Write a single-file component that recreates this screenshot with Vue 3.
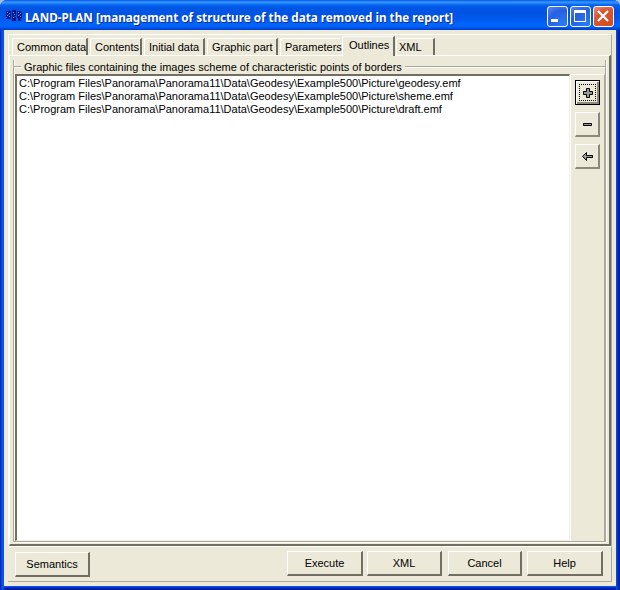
<script setup>
const tabs = [
  { name: 'Common data', id: 'common' },
  { name: 'Contents', id: 'contents' },
  { name: 'Initial data', id: 'initial' },
  { name: 'Graphic part', id: 'graphic' },
  { name: 'Parameters', id: 'params' },
  { name: 'Outlines', id: 'outlines' },
  { name: 'XML', id: 'xml' },
]
const folder = 'C:\\Program Files\\Panorama\\Panorama11\\Data\\Geodesy\\Example500\\Picture\\'
const files = ['geodesy.emf', 'sheme.emf', 'draft.emf'].map((f) => folder + f)
</script>

<template>
  <div class="window">
    <header class="title">
      <svg class="app" width="17" height="16" viewBox="0 0 17 16" shape-rendering="crispEdges">
        <path d="M0 2h5v8H0zM6 1h4v11H6zM11 2h5v7h-5zM12 9h3v3h-3z" fill="#06168c" />
        <path d="M1 3h1v1H1zM3 4h1v1H3zM1 6h1v1H1zM3 7h1v1H3zM7 3h1v1H7zM8 5h1v1H8zM7 8h1v1H7zM12 3h1v1h-1zM14 4h1v1h-1zM12 6h1v1h-1zM14 7h1v1h-1z" fill="#58a8ee" />
        <path d="M2 5h1v1H2zM0 8h1v1H0zM9 7h1v1H9zM13 5h1v1h-1zM15 2h1v1h-1z" fill="#2c60e4" />
      </svg>
      <h1><span>LAND-PLAN [management of structure of the data removed in the report]</span></h1>
      <div class="controls">
        <button class="ctl"><svg width="21" height="21"><path d="M4 13h7v3H4z" fill="#fff" /></svg></button>
        <button class="ctl"><svg width="21" height="21"><path d="M4 4h12v12H4zM5 7v8h10V7z" fill="#fff" fill-rule="evenodd" /></svg></button>
        <button class="ctl close"><svg width="21" height="21"><path d="M5 5l10 10M15 5L5 15" stroke="#fff" stroke-width="2.2" /></svg></button>
      </div>
    </header>
    <main class="client">
      <section class="upper">
        <nav class="tabs">
          <button v-for="t in tabs" :key="t.id" class="tab" :class="[t.id, { active: t.id === 'outlines' }]"><span>{{ t.name }}</span></button>
        </nav>
        <div class="page">
          <div class="group">
            <div class="legend"><i class="stub"></i><span>Graphic files containing the images scheme of characteristic points of borders</span><i class="rule"></i></div>
            <div class="body">
              <div class="list">
                <div v-for="f in files" :key="f" class="row"><span>{{ f }}</span></div>
              </div>
              <div class="side">
                <button class="tool focus"><svg width="17" height="17"><path d="M7.5 4.5h3v3h3v3h-3v3h-3v-3h-3v-3h3z" fill="#999" stroke="#000" /></svg></button>
                <button class="tool"><svg width="17" height="17"><path d="M4.5 7.5h8v2h-8z" fill="#999" stroke="#000" /></svg></button>
                <button class="tool"><svg width="17" height="17"><path d="M3.5 8.5l4-4v3h6v2h-6v3z" fill="#999" stroke="#000" /></svg></button>
              </div>
            </div>
          </div>
        </div>
      </section>
      <footer class="footer">
        <button class="btn sem"><span>Semantics</span></button>
        <button class="btn exe"><span>Execute</span></button>
        <button class="btn x"><span>XML</span></button>
        <button class="btn can"><span>Cancel</span></button>
        <button class="btn help"><span>Help</span></button>
      </footer>
    </main>
  </div>
</template>

<style>
body { margin: 0; background: #a6bfe8; overflow: hidden; }
</style>
<style scoped>
* { box-sizing: border-box; }
button { margin: 0; padding: 0; font: inherit; color: inherit; border: 0; background: #ece9d8; border-radius: 0; }
span { white-space: nowrap; }
svg { display: block; flex: none; }
.window { width: 620px; height: 590px; display: flex; flex-direction: column; background: linear-gradient(90deg, #001ea0 0, #0831d9 1px, #0855dd 2px, #0855dd 4px, #0855dd 616px, #0041dc 617px, #001ea0 619px); border-radius: 7px 7px 0 0; font: 11px/13px "Liberation Sans", Arial, sans-serif; color: #000; overflow: hidden; }
.title { height: 30px; flex: none; display: flex; align-items: flex-start; padding: 6px 6px 0; background: linear-gradient(#0058e6 0, #3a93ff 2px, #288eff 3px, #0463ee 5px, #0055e5 8px, #0054e3 14px, #005bf0 20px, #0066ff 25px, #0060f8 27px, #0046d0 29px, #003dd7 30px); }
.app { margin-top: 3px; }
h1 { flex: 1; margin: 3px 0 0 2px; font: bold 13px/17px "Noto Sans", sans-serif; color: #fff; text-shadow: 1px 1px #0a2a8c; font-stretch: condensed; }
h1 span { display: inline-block; transform-origin: 0 50%; transform: scaleX(.9); }
.controls { display: flex; gap: 2px; }
.ctl { width: 21px; height: 21px; border: 1px solid #fff; border-radius: 3px; background: radial-gradient(circle at 80% 90%, #2a7cf4, #2560e2 60%, #5c88f0); }
.ctl svg { margin: -1px; }
.close { background: radial-gradient(circle at 80% 90%, #d84c20, #da5330 60%, #ed8f78); }
.client { flex: 1; margin: 0 4px 4px; padding: 4px 4px 4px; background: #ece9d8; box-shadow: 0 1px #0855dd, 0 2px #0831d9, 0 4px #001ea0; }
.upper { height: 512px; border-top: 1px solid #fff; border-left: 1px solid #fff; border-right: 1px solid #aca899; box-shadow: inset 0 0 #fff; }
.tabs { height: 20px; display: flex; align-items: flex-end; padding-left: 3px; }
.tab { height: 17px; flex: none; border: solid; border-width: 1px 2px 0 1px; border-color: #fff #716f64 #fff #fff; border-right-style: solid; text-align: left; padding-left: 4px; border-top-left-radius: 2px; margin-right: 2px; line-height: 15px; }
.common { width: 76px; }
.contents { width: 52px; }
.initial { width: 61px; }
.graphic { width: 71px; }
.params { width: 60px; border-right: 0; }
.outlines { width: 53px; padding-left: 6px; }
.xml { width: 39px; padding-left: 2px; }
.active { height: 20px; margin: 0 1px 0 0; margin-bottom: -1px; line-height: 16px; padding-bottom: 3px; }
.page { height: 491px; border: solid; border-width: 1px 2px 2px 1px; border-color: #fff #716f64 #716f64 #fff; padding: 4px 3px 0 3px; }
.group { height: 482px; display: flex; flex-direction: column; border: solid #aca899; border-width: 0 1px 1px; box-shadow: inset 1px 0 #fff, 1px 0 #fff, 0 1px #fff; }
.legend { height: 14px; display: flex; flex: none; align-items: center; }
.stub, .rule { height: 2px; border-top: 1px solid #aca899; border-bottom: 1px solid #fff; }
.stub { width: 7px; margin-right: 3px; }
.rule { flex: 1; margin-left: 3px; }
.body { flex: 1; display: flex; padding: 0 0 0 1px; }
.list { width: 555px; background: #fff; border: solid; border-width: 2px 1px 1px 2px; border-color: #716f64 #f1efe2 #f1efe2 #716f64; padding: 1px 2px; }
.row { height: 13px; }
.side { flex: 1; display: flex; flex-direction: column; align-items: flex-start; gap: 7px; padding: 5px 0 0 4px; border: solid; border-width: 1px 1px 0; border-color: #fff #aca899 #fff #fff; }
.tool { width: 25px; height: 25px; border: solid; border-width: 1px 2px 2px 1px; border-color: #fff #8c897b #8c897b #fff; display: flex; align-items: center; justify-content: center; }
.focus { border: 1px solid #000; box-shadow: inset 1px 1px #fff, inset -2px -2px #8c897b; }
.focus svg { outline: 1px dotted #000; outline-offset: -1px; }
.footer { height: 36px; display: flex; align-items: flex-start; border: solid; border-width: 1px 1px 1px 0; border-color: #fff #aca899 #aca899; padding: 4px 0 0 7px; }
.btn { height: 25px; border: solid; border-width: 1px 2px 2px 1px; border-color: #fff #716f64 #716f64 #fff; }
.sem { width: 75px; margin-top: 1px; }
.exe { width: 76px; margin-left: 197px; }
.x { width: 75px; margin-left: 4px; }
.can { width: 74px; margin-left: 6px; }
.help { width: 76px; margin-left: 5px; }
</style>
